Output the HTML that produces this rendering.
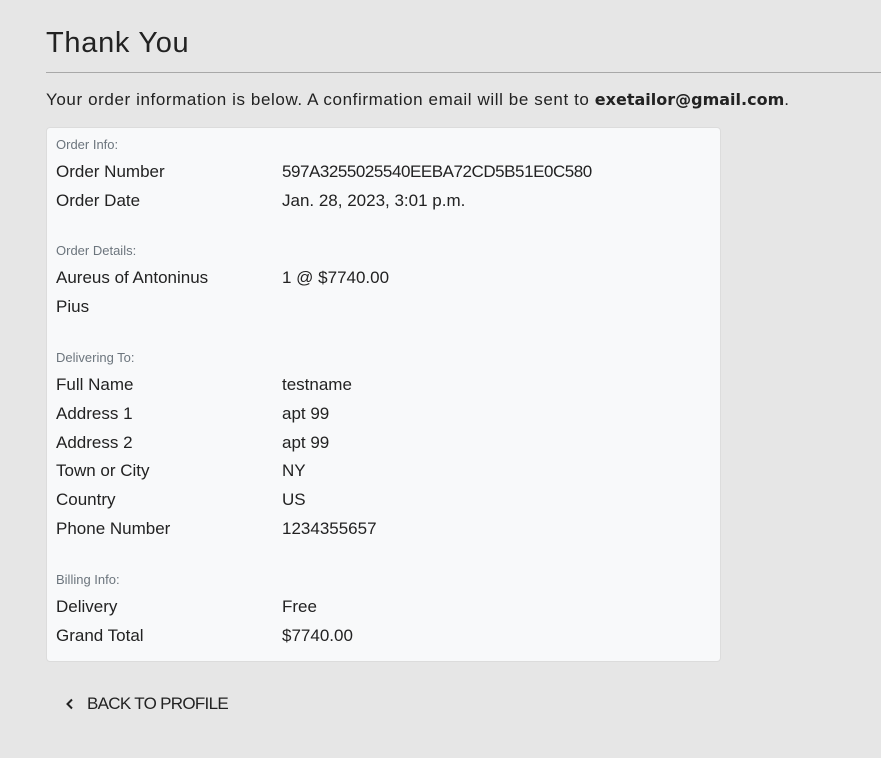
<!DOCTYPE html>
<html><head><meta charset="utf-8"><style>
html,body{margin:0;padding:0;width:881px;height:758px;background:#e6e6e6;overflow:hidden;font-family:"Liberation Sans",sans-serif;color:#222;}
.a{position:absolute;white-space:nowrap;line-height:20px;}
h1{position:absolute;left:46px;top:24px;margin:0;font-weight:normal;font-size:29px;line-height:38px;color:#222;letter-spacing:0.7px}
hr{position:absolute;left:46px;top:72px;width:835px;margin:0;border:0;border-top:1px solid #a8a8a8}
.card{position:absolute;left:46px;top:127px;width:673px;height:533px;background:#f8f9fa;border:1px solid #dcdcdc;border-radius:4px}
.s{font-size:13px;color:#6c757d}
.l{font-size:17px;left:56px;margin-top:1px}
.v{font-size:17px;left:282px;margin-top:1px}
</style></head><body>
<h1>Thank You</h1>
<hr>
<div class="a" style="left:46px;top:90px;font-size:17px;letter-spacing:0.6px">Your order information is below. A confirmation email will be sent to <b style="font-family:'DejaVu Sans',sans-serif;font-size:16px;letter-spacing:0">exetailor@gmail.com</b>.</div>
<div class="card"></div>
<div class="a s" style="left:56px;top:135px">Order Info:</div>
<div class="a l" style="top:161px">Order Number</div><div class="a v" style="top:161px;letter-spacing:-0.45px">597A3255025540EEBA72CD5B51E0C580</div>
<div class="a l" style="top:190px">Order Date</div><div class="a v" style="top:190px">Jan. 28, 2023, 3:01 p.m.</div>
<div class="a s" style="left:56px;top:241px">Order Details:</div>
<div class="a l" style="top:267px">Aureus of Antoninus</div><div class="a v" style="top:267px">1 @ $7740.00</div>
<div class="a l" style="top:296px">Pius</div>
<div class="a s" style="left:56px;top:348px">Delivering To:</div>
<div class="a l" style="top:374px">Full Name</div><div class="a v" style="top:374px">testname</div>
<div class="a l" style="top:403px">Address 1</div><div class="a v" style="top:403px">apt 99</div>
<div class="a l" style="top:432px">Address 2</div><div class="a v" style="top:432px">apt 99</div>
<div class="a l" style="top:460px">Town or City</div><div class="a v" style="top:460px">NY</div>
<div class="a l" style="top:489px">Country</div><div class="a v" style="top:489px">US</div>
<div class="a l" style="top:518px">Phone Number</div><div class="a v" style="top:518px">1234355657</div>
<div class="a s" style="left:56px;top:570px">Billing Info:</div>
<div class="a l" style="top:596px">Delivery</div><div class="a v" style="top:596px">Free</div>
<div class="a l" style="top:625px">Grand Total</div><div class="a v" style="top:625px">$7740.00</div>
<svg style="position:absolute;left:65px;top:698px" width="10" height="12" viewBox="0 0 10 12"><path d="M7 1.5L2.5 6L7 10.5" fill="none" stroke="#222" stroke-width="2"/></svg>
<div class="a" style="left:87px;top:694px;font-size:17px;letter-spacing:-0.7px">BACK TO PROFILE</div>
</body></html>
